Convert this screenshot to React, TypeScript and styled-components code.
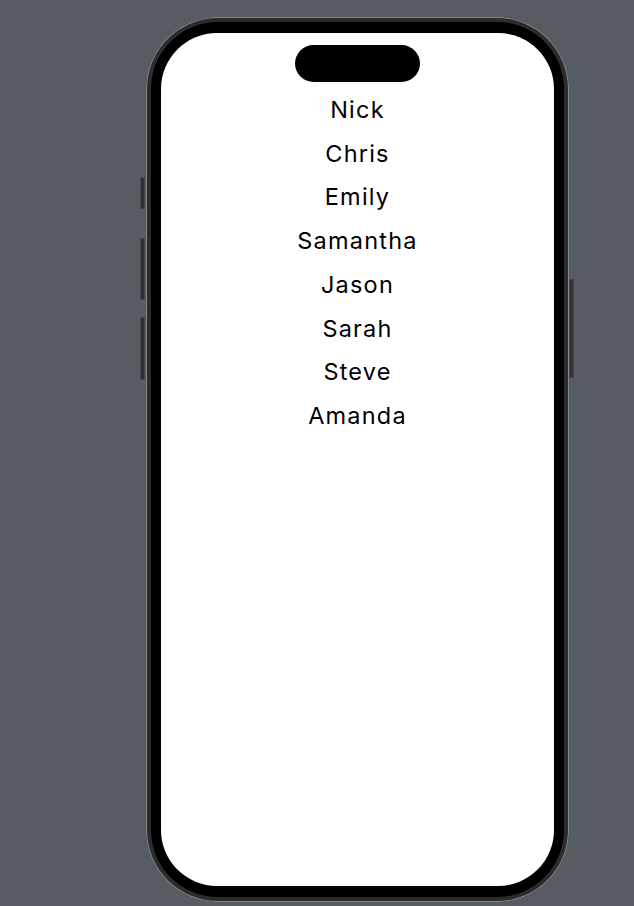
import React from 'react';
import styled, { createGlobalStyle } from 'styled-components';

const names = ['Nick', 'Chris', 'Emily', 'Samantha', 'Jason', 'Sarah', 'Steve', 'Amanda'];

const GlobalStyle = createGlobalStyle`
  html, body {
    margin: 0;
    padding: 0;
    background: #575c63;
  }
  * {
    box-sizing: border-box;
  }
`;

const Stage = styled.div`
  min-height: 906px;
  display: flex;
  align-items: flex-start;
  padding: 17px 0 0 140px;
`;

const Rail = styled.div<{ $side: 'left' | 'right' }>`
  display: flex;
  flex-direction: column;
  width: 6px;
  padding-top: ${(p) => (p.$side === 'left' ? 160 : 262)}px;
  padding-left: ${(p) => (p.$side === 'right' ? 0 : 0)}px;
`;

const SideButton = styled.div<{ $side: 'left' | 'right'; $gap: number; $height: number }>`
  width: 5px;
  height: ${(p) => p.$height}px;
  margin-top: ${(p) => p.$gap}px;
  background: #303134;
  border-radius: ${(p) => (p.$side === 'left' ? '2px 0 0 2px' : '0 2px 2px 0')};
  box-shadow: inset 0 0 0 1px #45474b;
`;

const Device = styled.div`
  width: 423px;
  height: 885px;
  padding: 5px;
  border-radius: 72px;
  background: #2c2c2e;
  box-shadow: inset 0 0 0 1px #85878b;
`;

const Bezel = styled.div`
  height: 100%;
  padding: 11px 10px;
  border-radius: 67px;
  background: #000;
`;

const Screen = styled.div`
  height: 100%;
  display: flex;
  flex-direction: column;
  align-items: center;
  border-radius: 56px;
  background: #fff;
  overflow: hidden;
`;

const Island = styled.div`
  width: 125px;
  height: 37px;
  margin-top: 12px;
  border-radius: 19px;
  background: #000;
`;

const NameList = styled.ul`
  list-style: none;
  margin: 6px 0 0;
  padding: 0;
  display: flex;
  flex-direction: column;
  align-items: center;
`;

const Name = styled.li`
  font-family: Inter, 'Liberation Sans', sans-serif;
  font-size: 23.5px;
  line-height: 43.7px;
  letter-spacing: 1.2px;
  color: #000;
`;

export default function App() {
  return (
    <>
      <GlobalStyle />
      <Stage>
        <Rail $side="left">
          <SideButton $side="left" $gap={0} $height={32} />
          <SideButton $side="left" $gap={29} $height={62} />
          <SideButton $side="left" $gap={17} $height={63} />
        </Rail>
        <Device>
          <Bezel>
            <Screen>
              <Island />
              <NameList>
                {names.map((name) => (
                  <Name key={name}>{name}</Name>
                ))}
              </NameList>
            </Screen>
          </Bezel>
        </Device>
        <Rail $side="right">
          <SideButton $side="right" $gap={0} $height={99} />
        </Rail>
      </Stage>
    </>
  );
}
